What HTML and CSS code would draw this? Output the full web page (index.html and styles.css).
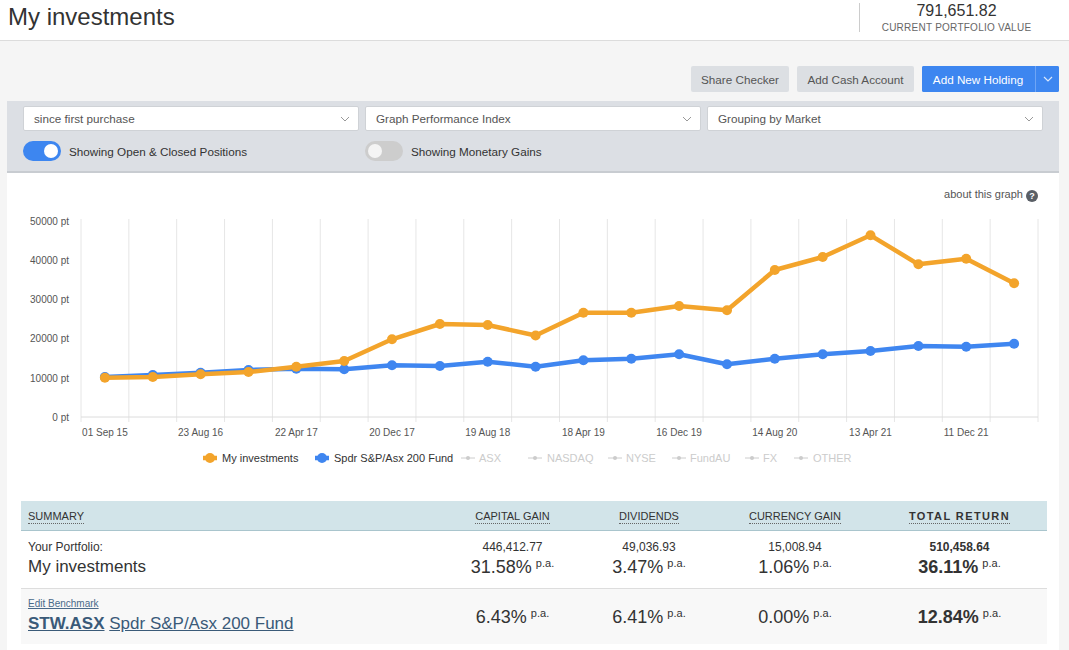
FILE: index.html
```html
<!DOCTYPE html>
<html lang="en">
<head>
<meta charset="utf-8">
<title>My investments</title>
<link rel="stylesheet" href="styles.css">
</head>
<body>
<header class="top">
  <h1 class="title">My investments</h1>
  <div class="pv">
    <div class="pv-value">791,651.82</div>
    <div class="pv-label">CURRENT PORTFOLIO VALUE</div>
  </div>
</header>
<main class="page">
  <div class="actions">
    <button class="btn btn-gray btn-share">Share Checker</button>
    <button class="btn btn-gray btn-cash">Add Cash Account</button>
    <div class="split">
      <button class="btn btn-blue btn-add">Add New Holding</button>
      <button class="btn btn-blue btn-caret"><svg width="10" height="6" viewBox="0 0 10 6"><polyline points="1,1 5,5 9,1" fill="none" stroke="#dbe7fb" stroke-width="1.2"/></svg></button>
    </div>
  </div>

  <section class="filters">
    <div class="select"><span>since first purchase</span><svg class="chev" width="10" height="6" viewBox="0 0 10 6"><polyline points="1,1 5,5 9,1" fill="none" stroke="#999" stroke-width="1"/></svg></div>
    <div class="select"><span>Graph Performance Index</span><svg class="chev" width="10" height="6" viewBox="0 0 10 6"><polyline points="1,1 5,5 9,1" fill="none" stroke="#999" stroke-width="1"/></svg></div>
    <div class="select"><span>Grouping by Market</span><svg class="chev" width="10" height="6" viewBox="0 0 10 6"><polyline points="1,1 5,5 9,1" fill="none" stroke="#999" stroke-width="1"/></svg></div>
    <div class="toggle-item"><span class="toggle on"><span class="knob"></span></span><span>Showing Open &amp; Closed Positions</span></div>
    <div class="toggle-item"><span class="toggle"><span class="knob"></span></span><span>Showing Monetary Gains</span></div>
    <div></div>
  </section>

  <section class="card">
    <div class="about">about this graph <span class="q">?</span></div>
    <svg class="chart" width="1052" height="270" viewBox="7 200 1052 270">
      <g stroke="#e6e6e6" stroke-width="1">
        <line x1="81" y1="218" x2="81" y2="421"/>
        <line x1="128.85" y1="218" x2="128.85" y2="421"/>
        <line x1="176.7" y1="218" x2="176.7" y2="421"/>
        <line x1="224.55" y1="218" x2="224.55" y2="421"/>
        <line x1="272.4" y1="218" x2="272.4" y2="421"/>
        <line x1="320.25" y1="218" x2="320.25" y2="421"/>
        <line x1="368.1" y1="218" x2="368.1" y2="421"/>
        <line x1="415.95" y1="218" x2="415.95" y2="421"/>
        <line x1="463.8" y1="218" x2="463.8" y2="421"/>
        <line x1="511.65" y1="218" x2="511.65" y2="421"/>
        <line x1="559.5" y1="218" x2="559.5" y2="421"/>
        <line x1="607.35" y1="218" x2="607.35" y2="421"/>
        <line x1="655.2" y1="218" x2="655.2" y2="421"/>
        <line x1="703.05" y1="218" x2="703.05" y2="421"/>
        <line x1="750.9" y1="218" x2="750.9" y2="421"/>
        <line x1="798.75" y1="218" x2="798.75" y2="421"/>
        <line x1="846.6" y1="218" x2="846.6" y2="421"/>
        <line x1="894.45" y1="218" x2="894.45" y2="421"/>
        <line x1="942.3" y1="218" x2="942.3" y2="421"/>
        <line x1="990.15" y1="218" x2="990.15" y2="421"/>
        <line x1="1038" y1="218" x2="1038" y2="421"/>
      </g>
      <line x1="81" y1="416" x2="1038" y2="416" stroke="#dcdcdc" stroke-width="1"/>
      <g class="axis-y" text-anchor="end">
        <text x="69" y="223.5">50000 pt</text>
        <text x="69" y="263">40000 pt</text>
        <text x="69" y="302">30000 pt</text>
        <text x="69" y="341">20000 pt</text>
        <text x="69" y="380.5">10000 pt</text>
        <text x="69" y="420">0 pt</text>
      </g>
      <g class="axis-x" text-anchor="middle">
        <text x="104.9" y="434.5">01 Sep 15</text>
        <text x="200.6" y="434.5">23 Aug 16</text>
        <text x="296.3" y="434.5">22 Apr 17</text>
        <text x="392" y="434.5">20 Dec 17</text>
        <text x="487.7" y="434.5">19 Aug 18</text>
        <text x="583.4" y="434.5">18 Apr 19</text>
        <text x="679.1" y="434.5">16 Dec 19</text>
        <text x="774.8" y="434.5">14 Aug 20</text>
        <text x="870.5" y="434.5">13 Apr 21</text>
        <text x="966.2" y="434.5">11 Dec 21</text>
      </g>
      <g fill="#3f86f0">
        <polyline fill="none" stroke="#3f86f0" stroke-width="4.5" stroke-linejoin="round" points="104.9,376 152.8,374 200.6,371.7 248.5,369 296.3,367.7 344.2,368.3 392,364.3 439.9,365 487.7,360.7 535.6,365.7 583.4,359.3 631.3,357.7 679.1,353.3 727,363.3 774.8,357.7 822.7,353.3 870.5,350 918.4,345 966.2,345.7 1014.1,342.7"/>
        <circle cx="104.9" cy="376" r="5"/><circle cx="152.8" cy="374" r="5"/><circle cx="200.6" cy="371.7" r="5"/><circle cx="248.5" cy="369" r="5"/><circle cx="296.3" cy="367.7" r="5"/><circle cx="344.2" cy="368.3" r="5"/><circle cx="392" cy="364.3" r="5"/><circle cx="439.9" cy="365" r="5"/><circle cx="487.7" cy="360.7" r="5"/><circle cx="535.6" cy="365.7" r="5"/><circle cx="583.4" cy="359.3" r="5"/><circle cx="631.3" cy="357.7" r="5"/><circle cx="679.1" cy="353.3" r="5"/><circle cx="727" cy="363.3" r="5"/><circle cx="774.8" cy="357.7" r="5"/><circle cx="822.7" cy="353.3" r="5"/><circle cx="870.5" cy="350" r="5"/><circle cx="918.4" cy="345" r="5"/><circle cx="966.2" cy="345.7" r="5"/><circle cx="1014.1" cy="342.7" r="5"/>
      </g>
      <g fill="#f3a42b">
        <polyline fill="none" stroke="#f3a42b" stroke-width="4.5" stroke-linejoin="round" points="104.9,376.7 152.8,376 200.6,373.3 248.5,371 296.3,365.7 344.2,360 392,338.3 439.9,323 487.7,324 535.6,334.5 583.4,311.7 631.3,311.7 679.1,305 727,309.3 774.8,269 822.7,256 870.5,234.3 918.4,263.3 966.2,257.7 1014.1,282.3"/>
        <circle cx="104.9" cy="376.7" r="5"/><circle cx="152.8" cy="376" r="5"/><circle cx="200.6" cy="373.3" r="5"/><circle cx="248.5" cy="371" r="5"/><circle cx="296.3" cy="365.7" r="5"/><circle cx="344.2" cy="360" r="5"/><circle cx="392" cy="338.3" r="5"/><circle cx="439.9" cy="323" r="5"/><circle cx="487.7" cy="324" r="5"/><circle cx="535.6" cy="334.5" r="5"/><circle cx="583.4" cy="311.7" r="5"/><circle cx="631.3" cy="311.7" r="5"/><circle cx="679.1" cy="305" r="5"/><circle cx="727" cy="309.3" r="5"/><circle cx="774.8" cy="269" r="5"/><circle cx="822.7" cy="256" r="5"/><circle cx="870.5" cy="234.3" r="5"/><circle cx="918.4" cy="263.3" r="5"/><circle cx="966.2" cy="257.7" r="5"/><circle cx="1014.1" cy="282.3" r="5"/>
      </g>
      <g class="legend">
        <line x1="203" y1="457" x2="217" y2="457" stroke="#f3a42b" stroke-width="4.5"/>
        <circle cx="210" cy="457" r="5" fill="#f3a42b"/>
        <text x="222" y="461" class="lg-on">My investments</text>
        <line x1="315" y1="457" x2="329" y2="457" stroke="#3f86f0" stroke-width="4.5"/>
        <circle cx="322" cy="457" r="5" fill="#3f86f0"/>
        <text x="334" y="461" class="lg-on">Spdr S&amp;P/Asx 200 Fund</text>
        <g stroke="#cccccc" stroke-width="1">
          <line x1="461" y1="457" x2="475" y2="457"/>
          <line x1="528" y1="457" x2="542" y2="457"/>
          <line x1="608" y1="457" x2="622" y2="457"/>
          <line x1="672" y1="457" x2="686" y2="457"/>
          <line x1="745" y1="457" x2="759" y2="457"/>
          <line x1="794" y1="457" x2="808" y2="457"/>
        </g>
        <g fill="#cccccc">
          <circle cx="468" cy="457" r="2"/><circle cx="535" cy="457" r="2"/><circle cx="615" cy="457" r="2"/><circle cx="679" cy="457" r="2"/><circle cx="752" cy="457" r="2"/><circle cx="801" cy="457" r="2"/>
        </g>
        <text x="479" y="461" class="lg-off">ASX</text>
        <text x="547" y="461" class="lg-off">NASDAQ</text>
        <text x="626" y="461" class="lg-off">NYSE</text>
        <text x="690" y="461" class="lg-off">FundAU</text>
        <text x="763" y="461" class="lg-off">FX</text>
        <text x="813" y="461" class="lg-off">OTHER</text>
      </g>
    </svg>

    <div class="summary">
      <div class="srow shead">
        <div class="c c-left"><span class="dot">SUMMARY</span></div>
        <div class="c"><span class="dot">CAPITAL GAIN</span></div>
        <div class="c"><span class="dot">DIVIDENDS</span></div>
        <div class="c"><span class="dot">CURRENCY GAIN</span></div>
        <div class="c"><span class="dot strong">TOTAL RETURN</span></div>
      </div>
      <div class="srow sport">
        <div class="c c-left">
          <div class="small">Your Portfolio:</div>
          <div class="big">My investments</div>
        </div>
        <div class="c">
          <div class="small">446,412.77</div>
          <div class="pct">31.58%<sup>p.a.</sup></div>
        </div>
        <div class="c">
          <div class="small">49,036.93</div>
          <div class="pct">3.47%<sup>p.a.</sup></div>
        </div>
        <div class="c">
          <div class="small">15,008.94</div>
          <div class="pct">1.06%<sup>p.a.</sup></div>
        </div>
        <div class="c">
          <div class="small b">510,458.64</div>
          <div class="pct b">36.11%<sup>p.a.</sup></div>
        </div>
      </div>
      <div class="srow sbench">
        <div class="c c-left">
          <div class="edit"><a href="#">Edit Benchmark</a></div>
          <div class="big"><a href="#" class="code">STW.ASX</a> <a href="#">Spdr S&amp;P/Asx 200 Fund</a></div>
        </div>
        <div class="c mid"><div class="pct">6.43%<sup>p.a.</sup></div></div>
        <div class="c mid"><div class="pct">6.41%<sup>p.a.</sup></div></div>
        <div class="c mid"><div class="pct">0.00%<sup>p.a.</sup></div></div>
        <div class="c mid"><div class="pct b">12.84%<sup>p.a.</sup></div></div>
      </div>
    </div>
  </section>
</main>
</body>
</html>
```

FILE: styles.css
```css
* { box-sizing: border-box; }
html, body { margin: 0; padding: 0; }
body {
  font-family: "Liberation Sans", Arial, sans-serif;
  color: #333;
  background: #f5f5f5;
  width: 1069px;
  overflow: hidden;
}

.top {
  height: 41px;
  background: #fff;
  border-bottom: 1px solid #dcdcdc;
  display: flex;
  justify-content: space-between;
  align-items: flex-start;
}
.title {
  margin: 0;
  padding-left: 8px;
  font-size: 24px;
  font-weight: normal;
  line-height: 33px;
  color: #333;
}
.pv {
  margin-top: 3px;
  margin-right: 16px;
  width: 194px;
  height: 29px;
  border-left: 1px solid #ccc;
  text-align: center;
}
.pv-value { font-size: 16px; line-height: 16px; color: #333; }
.pv-label { font-size: 10px; line-height: 12px; color: #666; margin-top: 3px; letter-spacing: 0.25px; }

.page { padding: 0 10px 0 7px; }

.actions {
  margin-top: 25px;
  display: flex;
  justify-content: flex-end;
  gap: 8px;
}
.btn {
  height: 26px;
  border: 0;
  border-radius: 2px;
  font-family: "Liberation Sans", Arial, sans-serif;
  font-size: 11.7px;
  padding: 0;
  cursor: pointer;
}
.btn-gray { background: #dcdfe3; color: #555; }
.btn-share { width: 98px; }
.btn-cash { width: 117px; }
.split { display: flex; gap: 1px; background: #3d86f0; border-radius: 2px; }
.btn-blue { background: #3d86f0; color: #fff; }
.btn-add { width: 112px; border-radius: 2px 0 0 2px; }
.btn-caret {
  width: 24px;
  border-left: 1px solid #6fa5f5;
  border-radius: 0 2px 2px 0;
  display: flex;
  align-items: center;
  justify-content: center;
}

.filters {
  margin-top: 9px;
  background: #dcdfe4;
  border-bottom: 2px solid #c8ccd1;
  padding: 5px 16px 10px 16px;
  display: grid;
  grid-template-columns: 336px 336px 336px;
  column-gap: 6px;
  row-gap: 10px;
}
.select {
  height: 25px;
  background: #fff;
  border: 1px solid #cfd2d6;
  border-radius: 2px;
  display: flex;
  align-items: center;
  justify-content: space-between;
  padding: 0 8px 0 10px;
  font-size: 11.7px;
  color: #555;
}
.chev { display: block; }
.toggle-item {
  display: flex;
  align-items: center;
  gap: 8px;
  font-size: 11.7px;
  color: #333;
  height: 20px;
}
.toggle {
  width: 38px;
  height: 20px;
  border-radius: 10px;
  background: #cdcdcd;
  display: flex;
  align-items: center;
  padding: 0 3px;
}
.toggle.on { background: #3d86f0; justify-content: flex-end; }
.knob {
  width: 14px;
  height: 14px;
  border-radius: 50%;
  background: #f4f4f4;
}
.toggle.on .knob { background: #fff; }

.card {
  background: #fff;
  padding: 14px 0 30px 0;
}
.about {
  height: 14px;
  line-height: 14px;
  font-size: 11px;
  color: #555;
  text-align: right;
  padding-right: 21px;
}
.q {
  display: inline-block;
  width: 12px;
  height: 12px;
  border-radius: 50%;
  background: #5a5f66;
  color: #fff;
  font-size: 9px;
  font-weight: bold;
  line-height: 12px;
  text-align: center;
  vertical-align: -1px;
}
.chart { display: block; }
.axis-y text, .axis-x text {
  font-family: "Liberation Sans", Arial, sans-serif;
  font-size: 10px;
  fill: #555;
}
.legend text {
  font-family: "Liberation Sans", Arial, sans-serif;
  font-size: 11px;
}
.lg-on { fill: #333; }
.lg-off { fill: #cccccc; }

.summary {
  margin: 30px 12px 0 14px;
}
.srow {
  display: grid;
  grid-template-columns: 424px 135px 138px 154px 175px;
}
.c { text-align: center; }
.c-left { text-align: left; padding-left: 7px; }
.shead {
  height: 30px;
  background: #d2e4e9;
  border-bottom: 1px solid #a9c5cd;
  align-items: center;
  font-size: 11px;
  color: #333;
}
.dot { border-bottom: 1px dotted #666; padding-bottom: 1px; }
.strong { font-weight: bold; letter-spacing: 1.4px; }
.sport {
  height: 58px;
  border-bottom: 1px solid #ddd;
  padding-top: 9px;
}
.small { font-size: 12px; line-height: 14px; }
.big { font-size: 17px; line-height: 22px; margin-top: 2px; }
.pct { font-size: 18px; line-height: 22px; margin-top: 2px; }
.pct sup { font-size: 11px; vertical-align: 6px; margin-left: 4px; font-weight: normal; line-height: 0; }
.b { font-weight: bold; }
.sbench {
  height: 55px;
  background: #f8f8f8;
  padding-top: 9px;
}
.sbench .mid { align-self: center; margin-top: -9px; }
.sbench .mid .pct { margin-top: 0; }
.edit { font-size: 10px; line-height: 12px; }
.edit a { color: #4a6a8a; }
.sbench .big { margin-top: 3px; }
.sbench .big a { color: #3a5a78; }
.code { font-weight: bold; }
```
